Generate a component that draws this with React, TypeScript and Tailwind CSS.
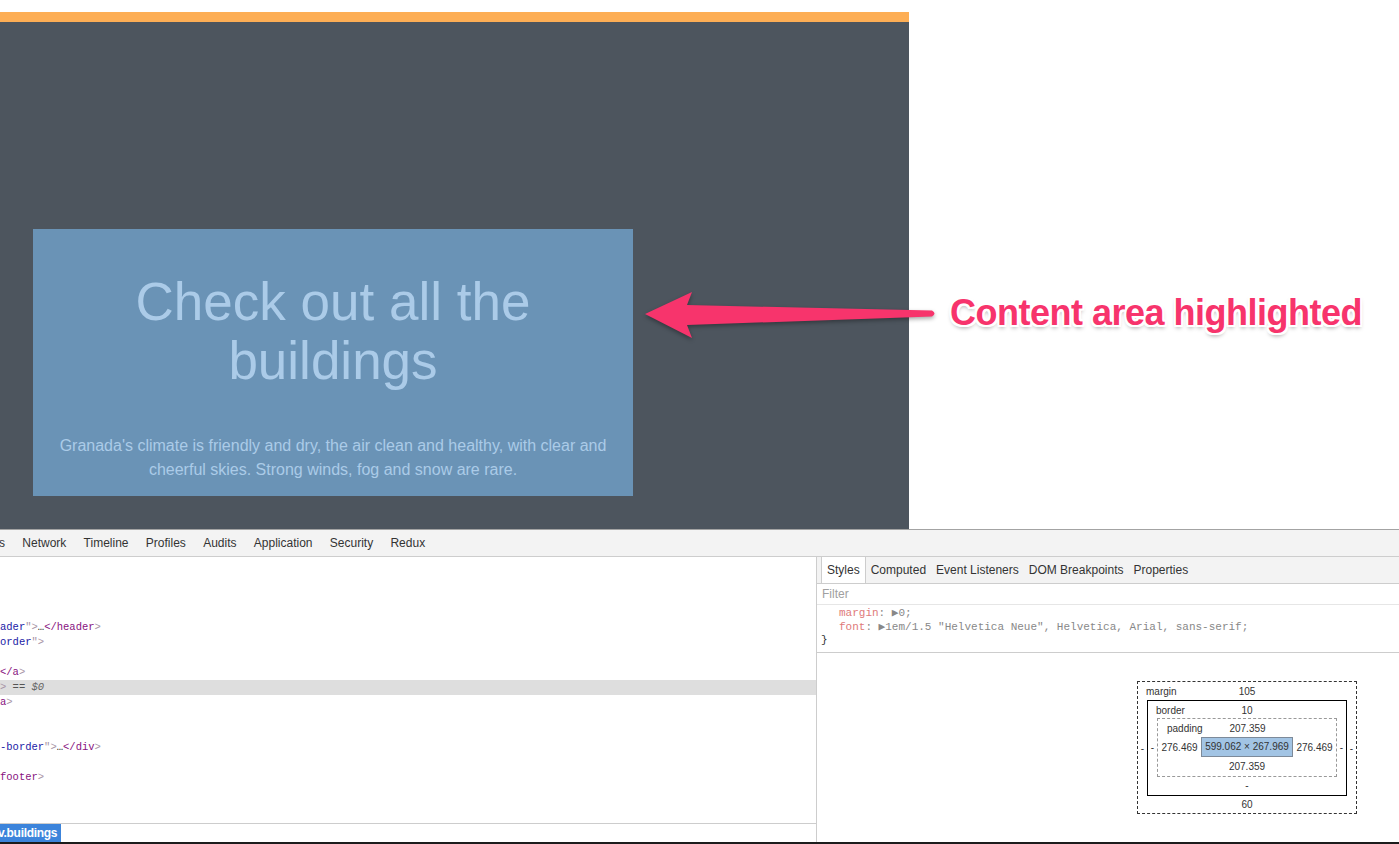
import React from "react"

const sans = "font-['Liberation_Sans','Helvetica_Neue',Arial,sans-serif]"
const mono = "font-['Liberation_Mono','DejaVu_Sans_Mono',monospace]"

function Tag({ children }: { children: React.ReactNode }) {
  return <span className="text-[#881280]">{children}</span>
}
function Val({ children }: { children: React.ReactNode }) {
  return <span className="text-[#1a1aa6]">{children}</span>
}
function Br({ children }: { children: React.ReactNode }) {
  return <span className="text-[#a894a6]">{children}</span>
}

const codeRows: (React.ReactNode | null)[] = [
  null, null, null, null,
  <><Val>ader</Val><Br>"&gt;</Br>…<Tag>&lt;/header</Tag><Br>&gt;</Br></>,
  <><Val>order</Val><Br>"&gt;</Br></>,
  null,
  <><Tag>&lt;/a</Tag><Br>&gt;</Br></>,
  <><Br>&gt;</Br><span className="text-[#555]"> == </span><span className="italic text-[#666]">$0</span></>,
  <><Tag>a</Tag><Br>&gt;</Br></>,
  null, null,
  <><Val>-border</Val><Br>"&gt;</Br>…<Tag>&lt;/div</Tag><Br>&gt;</Br></>,
  null,
  <><Tag>footer</Tag><Br>&gt;</Br></>,
  null, null,
]

function Arrow() {
  return (
    <svg width="300" height="60" viewBox="640 284 300 60" className="drop-shadow-[0_2px_2px_rgba(0,0,0,0.35)]">
      <path
        d="M645 314 L692 292 L687 305 L932 310.5 Q937 313.5 932 316.5 L687 325 L692 338 Z"
        fill="#f7346c"
      />
    </svg>
  )
}

function BoxRow({ label, value }: { label?: string; value: string }) {
  return (
    <div className="grid grid-cols-[1fr_auto_1fr] items-center pt-[2px]">
      <span className="pl-[8px] text-left">{label}</span>
      <span>{value}</span>
      <span />
    </div>
  )
}

function BoxModel() {
  return (
    <div className={`${sans} w-[220px] border border-dashed border-[#333] text-[10px] text-[#333] text-center`}>
      <div className="h-[18px]"><BoxRow label="margin" value="105" /></div>
      <div className="flex items-center">
        <span className="w-[10px]">-</span>
        <div className="w-[200px] border border-black">
          <div className="h-[17px]"><BoxRow label="border" value="10" /></div>
          <div className="flex items-center">
            <span className="w-[9px]">-</span>
            <div className="w-[180px] border border-dashed border-[#999]">
              <div className="h-[18px] pl-[1px]"><BoxRow label="padding" value="207.359" /></div>
              <div className="flex items-center h-[20px]">
                <span className="w-[43px]">276.469</span>
                <div className="w-[92px] h-[20px] border border-[#7d8a99] bg-[#a2c4e4] leading-[18px]">599.062 × 267.969</div>
                <span className="w-[43px]">276.469</span>
              </div>
              <div className="h-[19px] leading-[20px]">207.359</div>
            </div>
            <span className="w-[9px]">-</span>
          </div>
          <div className="h-[18px] leading-[18px]">-</div>
        </div>
        <span className="w-[10px]">-</span>
      </div>
      <div className="h-[17px] leading-[18px]">60</div>
    </div>
  )
}

export default function App() {
  const tabs = ["Network", "Timeline", "Profiles", "Audits", "Application", "Security", "Redux"]
  const subTabs = ["Computed", "Event Listeners", "DOM Breakpoints", "Properties"]
  return (
    <div className={`${sans} w-[1399px] h-[844px] overflow-hidden bg-white flex flex-col`}>
      {/* page preview */}
      <div className="relative h-[529px] flex">
        <div className="w-[909px] flex flex-col">
          <div className="h-[12px] bg-white" />
          <div className="h-[10px] bg-[#fdae55]" />
          <div className="flex-1 bg-[#4d555e] pl-[33px] pt-[207px]">
            <div className="w-[600px] h-[267px] bg-[#6a93b6] flex flex-col items-center text-center text-[#abcbe8] pt-[43px]">
              <h1 className="text-[53px] leading-[59px] px-[90px]">Check out all the buildings</h1>
              <p className="mt-[44px] text-[16px] leading-[24px] px-[18px]">
                Granada's climate is friendly and dry, the air clean and healthy, with clear and cheerful skies. Strong winds, fog and snow are rare.
              </p>
            </div>
          </div>
        </div>
        <div className="flex-1 bg-white" />

        {/* annotation */}
        <div className="absolute left-[640px] top-[284px]">
          <Arrow />
        </div>
        <div className="absolute left-[950px] top-[291px] text-[36px] leading-[44px] font-bold tracking-[-0.5px] text-[#f7346c] [text-shadow:1px_0_0_#fff,-1px_0_0_#fff,0_1px_0_#fff,0_-1px_0_#fff,2px_0_0_#fff,-2px_0_0_#fff,0_2px_0_#fff,0_-2px_0_#fff,1px_1px_0_#fff,-1px_-1px_0_#fff,1px_-1px_0_#fff,-1px_1px_0_#fff,2px_2px_0_#fff,-2px_2px_0_#fff,2px_-2px_0_#fff,-2px_-2px_0_#fff,0_3px_4px_rgba(0,0,0,0.35)]">
          Content area highlighted
        </div>
      </div>

      {/* devtools */}
      <div className="flex-1 flex flex-col border-t border-[#a3a3a3]">
        <div className="h-[27px] bg-[#f3f3f3] border-b border-[#cdcdcd] flex items-center gap-[17.3px] text-[12px] text-[#333] -ml-[1px]">
          <span>s</span>
          {tabs.map(t => <span key={t}>{t}</span>)}
        </div>
        <div className="flex-1 flex min-h-0">
          {/* elements pane */}
          <div className="w-[817px] border-r border-[#cdcdcd] flex flex-col">
            <div className={`${mono} flex-1 pt-[3px] text-[10.5px] text-[#222] overflow-hidden`}>
              {codeRows.map((row, i) => (
                <div key={i} className={`h-[15px] leading-[15px] whitespace-pre ${i === 8 ? "bg-[#dedede]" : ""}`}>
                  {row ?? " "}
                </div>
              ))}
            </div>
            <div className="h-[19px] border-t border-[#cdcdcd] flex items-center">
              <span className="h-[18px] px-[4px] -ml-[16px] bg-[#3c84db] text-white text-[12px] font-bold tracking-[-0.3px] leading-[18px]">div.buildings</span>
            </div>
          </div>

          {/* styles pane */}
          <div className="flex-1 flex flex-col">
            <div className="h-[27px] border-b border-[#cdcdcd] bg-[#f3f3f3] flex items-end pl-[4px] text-[12px] text-[#333]">
              <span className="h-[26px] leading-[27px] px-[5px] bg-white border-x border-[#cdcdcd]">Styles</span>
              {subTabs.map(t => <span key={t} className="h-[26px] leading-[27px] px-[5px]">{t}</span>)}
            </div>
            <div className="h-[21px] border-b border-[#e6e6e6] flex items-center pl-[5px] text-[12px] text-[#a0a0a0]">Filter</div>
            <div className={`${mono} h-[48px] border-b border-[#cdcdcd] overflow-hidden text-[11px] leading-[13.5px] text-[#888]`}>
              <div className="pl-[22px] mt-[2px]"><span className="text-[#e07a7a]">margin</span>: ▶0;</div>
              <div className="pl-[22px]"><span className="text-[#e07a7a]">font</span>: ▶1em/1.5 "Helvetica Neue", Helvetica, Arial, sans-serif;</div>
              <div className="pl-[4px] text-[#333]">{"}"}</div>
            </div>
            <div className="flex-1 pl-[320px] pt-[28px]">
              <BoxModel />
            </div>
          </div>
        </div>
        <div className="h-[2px] bg-[#1c1c1c]" />
      </div>
    </div>
  )
}
